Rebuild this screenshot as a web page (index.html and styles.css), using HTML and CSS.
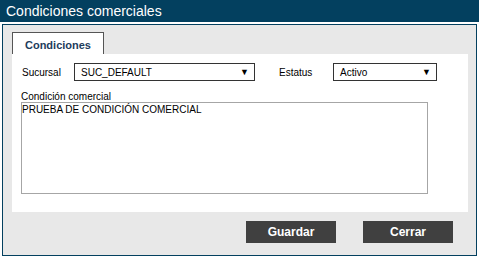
FILE: index.html
```html
<!DOCTYPE html>
<html lang="es">
  <head>
    <meta charset="UTF-8" />
    <title>Condiciones comerciales</title>
    <link rel="stylesheet" href="styles.css">
  </head>
  <body>
    <div class="title-bar">Condiciones comerciales</div>
    <div class="window">
      <div class="tabs">
        <div class="tab active">Condiciones</div>
      </div>
      <div class="tab-panel">
        <div class="row">
          <span class="label label-sucursal">Sucursal</span>
          <div class="dropdown dropdown-sucursal">
            <span>SUC_DEFAULT</span>
            <span class="arrow">&#9660;</span>
          </div>
          <span class="label label-estatus">Estatus</span>
          <div class="dropdown dropdown-estatus">
            <span>Activo</span>
            <span class="arrow">&#9660;</span>
          </div>
        </div>
        <div class="field">
          <label class="label" for="condicion">Condición comercial</label>
          <textarea id="condicion" class="textarea">PRUEBA DE CONDICIÓN COMERCIAL</textarea>
        </div>
      </div>
      <div class="actions">
        <button class="button">Guardar</button>
        <button class="button">Cerrar</button>
      </div>
    </div>
  </body>
</html>
```

FILE: styles.css
```css
body {
  margin: 0;
  padding: 0;
  font-family: 'Liberation Sans', Arial, sans-serif;
  font-size: 10px;
  color: #000;
  background-color: #fff;
}
.title-bar {
  height: 22px;
  line-height: 22px;
  padding-left: 6px;
  background-color: #03405f;
  color: #fff;
  font-family: 'Liberation Sans', Arial, sans-serif;
  font-size: 14px;
}
.window {
  margin: 2px 2px 0 2px;
  height: 223px;
  padding: 7px 8px 0 9px;
  border: 1px solid #03405f;
  background-color: #e8e8e8;
}
.tabs {
  display: flex;
}
.tab {
  width: 90px;
  height: 21px;
  line-height: 24px;
  text-align: center;
  border: 1px solid #555;
  border-bottom: none;
  background-color: #fff;
  color: #1d3c5c;
  font-size: 11px;
  font-weight: bold;
}
.tab-panel {
  height: 149px;
  padding: 9px 9px 0 9px;
  background-color: #fff;
}
.row {
  display: flex;
  align-items: center;
  height: 18px;
}
.label-sucursal {
  width: 52px;
  padding-left: 1px;
}
.label-estatus {
  width: 54px;
  margin-left: 24px;
}
.dropdown {
  display: flex;
  align-items: center;
  justify-content: space-between;
  box-sizing: border-box;
  height: 18px;
  padding: 0 5px 0 6px;
  border: 1px solid #333;
  font-size: 10px;
}
.dropdown-sucursal {
  width: 181px;
}
.dropdown-estatus {
  width: 104px;
}
.arrow {
  font-size: 9px;
}
.field {
  display: flex;
  flex-direction: column;
  margin-top: 10px;
}
.field .label {
  line-height: 11px;
}
.textarea {
  box-sizing: border-box;
  width: 407px;
  height: 92px;
  margin: 0;
  padding: 1px 0;
  border: 1px solid #a6a6a6;
  font-family: 'Liberation Sans', Arial, sans-serif;
  font-size: 10px;
  resize: none;
  outline: none;
}
.actions {
  display: flex;
  justify-content: flex-end;
  gap: 27px;
  margin-top: 9px;
  padding-right: 15px;
}
.button {
  width: 90px;
  height: 22px;
  border: none;
  background-color: #404040;
  color: #fff;
  font-family: 'Liberation Sans', Arial, sans-serif;
  font-size: 12px;
  font-weight: bold;
}
```
